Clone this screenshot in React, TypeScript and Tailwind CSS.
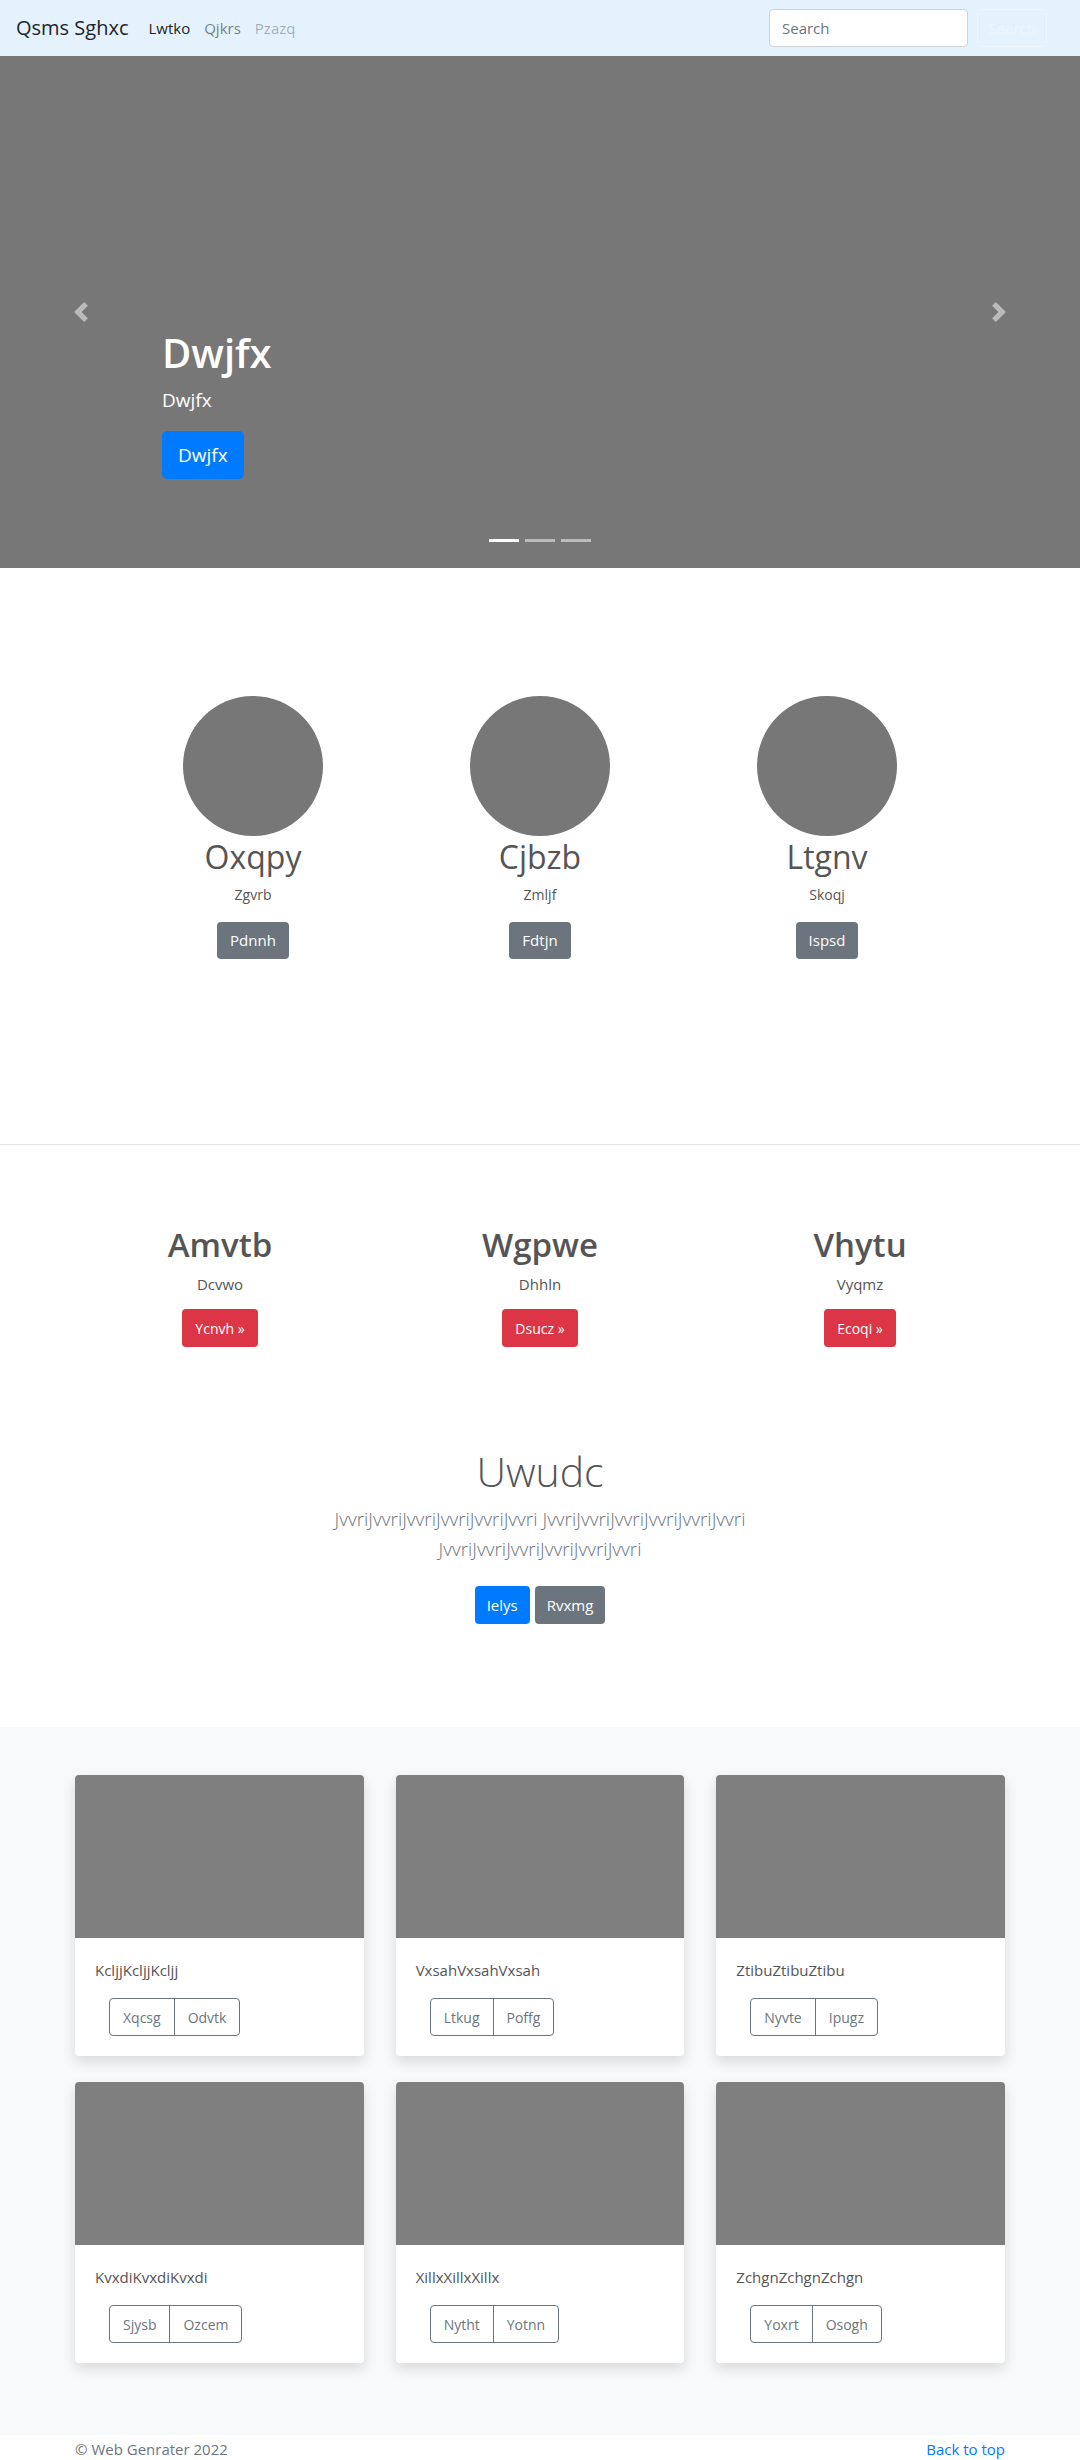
import React from 'react'

const font = { fontFamily: '"Open Sans", "Noto Sans", sans-serif' }

function Chevron({ dir }: { dir: 'left' | 'right' }) {
  return (
    <svg width="20" height="20" viewBox="0 0 8 8" className="opacity-50">
      <path
        fill="#fff"
        d={dir === 'left' ? 'M5.25 0l-4 4 4 4 1.5-1.5L4.25 4l2.5-2.5L5.25 0z' : 'M2.75 0l-1.5 1.5L3.75 4l-2.5 2.5L2.75 8l4-4-4-4z'}
      />
    </svg>
  )
}

function Circle({ name, sub, btn }: { name: string; sub: string; btn: string }) {
  return (
    <div className="flex flex-col items-center">
      <div className="h-[140px] w-[140px] rounded-full bg-[#777]"></div>
      <h2 className="mt-[2px] text-[32px] leading-[38px] text-[#555]">{name}</h2>
      <p className="mt-[8px] text-[14px] leading-[21px] text-[#555]">{sub}</p>
      <button className="mt-[17px] h-[37px] rounded-[4px] bg-[#6c757d] px-[13px] text-[15px] text-white">
        {btn}
      </button>
    </div>
  )
}

function Feature({ title, sub, btn }: { title: string; sub: string; btn: string }) {
  return (
    <div className="flex flex-col items-center">
      <h2 className="text-[33px] font-semibold leading-[40px] text-[#555]">{title}</h2>
      <p className="mt-[8px] text-[15px] leading-[22px] text-[#555]">{sub}</p>
      <button className="mt-[14px] h-[38px] rounded-[4px] bg-[#dc3545] px-[13px] text-[14px] text-white">
        {btn} »
      </button>
    </div>
  )
}

function Card({ text, a, b }: { text: string; a: string; b: string }) {
  return (
    <div className="overflow-hidden rounded-[4px] bg-white shadow-[0_6px_14px_rgba(0,0,0,0.13)]">
      <div className="h-[163px] bg-[#7f7f7f]"></div>
      <div className="px-5 pt-5 pb-5">
        <p className="text-[15px] leading-[24px] text-[#555]">{text}</p>
        <div className="mt-4 ml-[14px] flex w-fit rounded-[4px] border border-[#6c757d] text-[14px] text-[#6c757d]">
          <span className="flex h-[36px] items-center px-[13px]">{a}</span>
          <span className="flex h-[36px] items-center border-l border-[#6c757d] px-[13px]">{b}</span>
        </div>
      </div>
    </div>
  )
}

export default function App() {
  return (
    <div style={font} className="bg-white">
      <nav className="flex h-[56px] items-center bg-[#e3f2fd] pr-[33px] pl-4">
        <span className="text-[20px] text-[#212529]">Qsms Sghxc</span>
        <div className="ml-[20px] flex gap-[14px] text-[15px]">
          <span className="text-black/90">Lwtko</span>
          <span className="text-black/50">Qjkrs</span>
          <span className="text-black/30">Pzazq</span>
        </div>
        <div className="ml-auto flex items-center gap-[9px]">
          <div className="flex h-[38px] w-[199px] items-center rounded-[4px] border border-[#ced4da] bg-white px-3 text-[15px] text-[#6c757d]">
            Search
          </div>
          <div className="flex h-[38px] w-[70px] items-center justify-center rounded-[4px] border border-[#eef6fd] text-[15px] text-[#eef6fd]">
            Search
          </div>
        </div>
      </nav>

      <div className="relative h-[512px] bg-[#777]">
        <div className="absolute top-0 left-0 flex h-full w-[162px] items-center justify-center">
          <Chevron dir="left" />
        </div>
        <div className="absolute top-0 right-0 flex h-full w-[162px] items-center justify-center">
          <Chevron dir="right" />
        </div>
        <div className="absolute top-[273px] left-[162px] text-white">
          <h1 className="text-[40px] leading-[48px] font-semibold">Dwjfx</h1>
          <p className="mt-[9px] text-[19px] leading-[28px]">Dwjfx</p>
          <button className="mt-[17px] h-[48px] rounded-[5px] bg-[#007bff] px-4 text-[19px] text-white">
            Dwjfx
          </button>
        </div>
        <div className="absolute bottom-[26px] left-0 flex w-full justify-center gap-[6px]">
          <span className="h-[3px] w-[30px] bg-white"></span>
          <span className="h-[3px] w-[30px] bg-white/50"></span>
          <span className="h-[3px] w-[30px] bg-white/50"></span>
        </div>
      </div>

      <section className="pt-[128px] pb-[185px]">
        <div className="mx-auto grid w-[861px] grid-cols-3">
          <Circle name="Oxqpy" sub="Zgvrb" btn="Pdnnh" />
          <Circle name="Cjbzb" sub="Zmljf" btn="Fdtjn" />
          <Circle name="Ltgnv" sub="Skoqj" btn="Ispsd" />
        </div>
      </section>

      <hr className="border-[#e5e5e5]" />

      <section className="pt-[80px]">
        <div className="mx-auto grid w-[960px] grid-cols-3">
          <Feature title="Amvtb" sub="Dcvwo" btn="Ycnvh" />
          <Feature title="Wgpwe" sub="Dhhln" btn="Dsucz" />
          <Feature title="Vhytu" sub="Vyqmz" btn="Ecoqi" />
        </div>
      </section>

      <section className="pt-[99px] pb-[103px] text-center">
        <h1 className="text-[41px] leading-[50px] font-light text-[#555]">Uwudc</h1>
        <p className="mx-auto mt-[8px] w-[450px] text-[19px] leading-[30px] font-light break-words text-[#6c757d]">
          JvvriJvvriJvvriJvvriJvvriJvvri JvvriJvvriJvvriJvvriJvvriJvvri JvvriJvvriJvvriJvvriJvvriJvvri
        </p>
        <div className="mt-[22px] flex justify-center gap-[5px]">
          <button className="h-[38px] rounded-[4px] bg-[#007bff] px-3 text-[15px] text-white">Ielys</button>
          <button className="h-[38px] rounded-[4px] bg-[#6c757d] px-3 text-[15px] text-white">Rvxmg</button>
        </div>
      </section>

      <section className="bg-[#f8f9fa] pt-[48px] pb-[72px]">
        <div className="mx-auto grid w-[930px] grid-cols-3 gap-x-8 gap-y-[26px]">
          <Card text="KcljjKcljjKcljj" a="Xqcsg" b="Odvtk" />
          <Card text="VxsahVxsahVxsah" a="Ltkug" b="Poffg" />
          <Card text="ZtibuZtibuZtibu" a="Nyvte" b="Ipugz" />
          <Card text="KvxdiKvxdiKvxdi" a="Sjysb" b="Ozcem" />
          <Card text="XillxXillxXillx" a="Nytht" b="Yotnn" />
          <Card text="ZchgnZchgnZchgn" a="Yoxrt" b="Osogh" />
        </div>
      </section>

      <footer className="mx-auto flex w-[930px] justify-between pt-[2px] pb-6 text-[15px] leading-[24px]">
        <span className="text-[#6c757d]">© Web Genrater 2022</span>
        <span className="text-[#007bff]">Back to top</span>
      </footer>
    </div>
  )
}
